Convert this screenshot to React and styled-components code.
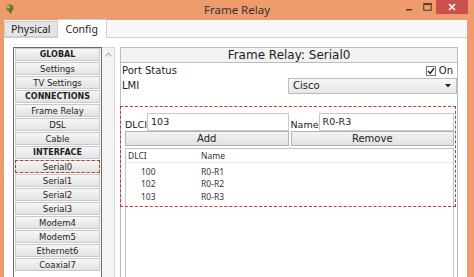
import React from 'react';
import styled, { createGlobalStyle } from 'styled-components';

const GlobalStyle = createGlobalStyle`
  html, body { margin: 0; padding: 0; background: #ee9b6d; }
  * { box-sizing: border-box; }
`;

const Window = styled.div`
  width: 474px;
  height: 277px;
  background: #ee9b6d;
  display: flex;
  flex-direction: column;
  overflow: hidden;
  font-family: 'DejaVu Sans', Verdana, sans-serif;
`;

const TitleBar = styled.div`
  height: 20px;
  flex: none;
  display: flex;
  align-items: flex-start;
  position: relative;
`;

const AppIcon = styled.svg`
  position: absolute;
  left: 5px;
  top: 3px;
`;

const Title = styled.div`
  flex: 1;
  text-align: center;
  font-family: 'Noto Sans', 'Open Sans', sans-serif;
  font-size: 11.5px;
  line-height: 20px;
  color: #3a3330;
`;

const Controls = styled.div`
  position: absolute;
  right: 6px;
  top: 0;
  display: flex;
  align-items: flex-start;
`;

const CtrlBtn = styled.div`
  width: ${p => p.w}px;
  height: 14px;
  display: flex;
  align-items: center;
  justify-content: center;
  background: ${p => p.close ? '#c9504b' : 'transparent'};
`;

const Client = styled.div`
  flex: 1;
  margin: 0 7px 0 4px;
  background: #ffffff;
  display: flex;
  flex-direction: column;
  min-height: 0;
`;

const TabStrip = styled.div`
  height: 18px;
  flex: none;
  display: flex;
  align-items: flex-end;
  background: #f7f7f7;
  border-bottom: 1px solid #cfcfcf;
`;

const Tab = styled.div`
  height: ${p => p.active ? 19 : 16}px;
  margin-bottom: ${p => p.active ? -1 : 0}px;
  padding: 0 ${p => p.active ? 8 : 6}px;
  display: flex;
  align-items: center;
  font-family: 'Noto Sans', 'Open Sans', sans-serif;
  font-size: 10.5px;
  color: #222;
  background: ${p => p.active ? '#ffffff' : '#e4e4e4'};
  border: 1px solid #cfcfcf;
  border-bottom: ${p => p.active ? '1px solid #ffffff' : '1px solid #cfcfcf'};
  border-left: ${p => p.first ? '1px solid #cfcfcf' : 'none'};
`;

const Body = styled.div`
  flex: 1;
  display: flex;
  padding: 9px 9px 0 9px;
  min-height: 0;
`;

const Sidebar = styled.div`
  display: flex;
  flex: none;
  margin-right: 5px;
`;

const NavList = styled.div`
  width: 89px;
  border: 1px solid #6a6a6a;
  border-bottom: none;
  padding: 0 1px;
  display: flex;
  flex-direction: column;
  background: #fff;
`;

const NavItem = styled.div`
  height: 13px;
  margin-bottom: 1px;
  display: flex;
  align-items: center;
  justify-content: center;
  font-size: ${p => p.heading ? 8 : 8.5}px;
  font-weight: ${p => p.heading ? 'bold' : 'normal'};
  color: #1e1e1e;
  background: linear-gradient(#f6f6f6, #e3e3e3);
  border: 1px solid #c9c9c9;
  outline: ${p => p.selected ? '1.5px dashed #c0392b' : 'none'};
  outline-offset: -1px;
`;

const ScrollTrack = styled.div`
  width: 13px;
  border: 1px solid #d6d6d6;
  border-left: none;
  border-bottom: none;
  background: #f4f4f4;
  display: flex;
  justify-content: center;
  padding-top: 4px;
`;

const Panel = styled.div`
  flex: 1;
  position: relative;
  display: flex;
  flex-direction: column;
  border: 1px solid #bdbdbd;
  border-bottom: none;
  min-width: 0;
`;

const PanelHeader = styled.div`
  height: 15px;
  display: flex;
  align-items: center;
  justify-content: center;
  font-size: 12px;
  color: #222;
  background: #f2f2f2;
  border-bottom: 1px solid #bdbdbd;
`;

const FieldRow = styled.div`
  height: 15px;
  display: flex;
  align-items: center;
  justify-content: space-between;
  padding: 0 0 0 1px;
  font-size: 10px;
  color: #222;
`;

const CheckLabel = styled.label`
  display: flex;
  align-items: center;
  gap: 3px;
  margin-right: 4px;
  font-size: 10px;
`;

const CheckBox = styled.span`
  width: 10px;
  height: 10px;
  border: 1px solid #7a7a7a;
  background: #fff;
  display: flex;
  align-items: center;
  justify-content: center;
`;

const Select = styled.div`
  width: 169px;
  height: 16px;
  display: flex;
  align-items: center;
  justify-content: space-between;
  padding: 0 5px 0 4px;
  background: linear-gradient(#f7f7f7, #e6e6e6);
  border: 1px solid #bcbcbc;
  font-size: 10px;
`;

const Form = styled.div`
  margin-top: 20px;
  padding: 0 3px 0 4px;
  display: grid;
  grid-template-columns: 1fr 1fr;
  column-gap: 2px;
`;

const InputGroup = styled.div`
  display: flex;
  align-items: flex-end;
  height: 18px;
`;

const InputLabel = styled.span`
  font-size: 9.5px;
  color: #222;
  padding-bottom: 1px;
`;

const TextInput = styled.div`
  flex: 1;
  height: 18px;
  border: 1px solid #c8c8c8;
  background: #fff;
  font-size: 9.5px;
  padding: 2px 3px;
  color: #222;
`;

const Button = styled.div`
  height: 15px;
  display: flex;
  align-items: center;
  justify-content: center;
  font-size: 10px;
  color: #222;
  background: linear-gradient(#f3f3f3, #e2e2e2);
  border: 1px solid #b4b4b4;
`;

const ListView = styled.div`
  flex: 1;
  margin: 2px 3px 0 4px;
  border: 1px solid #c4c4c4;
  border-bottom: none;
  background: #fff;
  font-family: 'Noto Sans', 'Open Sans', sans-serif;
  font-size: 8.5px;
  color: #333;
`;

const ListRow = styled.div`
  display: grid;
  grid-template-columns: 73px 1fr;
  height: ${p => p.head ? 14 : 12.5}px;
  align-items: center;
  border-bottom: ${p => p.head ? '1px solid #ececec' : 'none'};
  padding-left: ${p => p.head ? 2 : 0}px;
  margin-bottom: ${p => p.head ? 2 : 0}px;
`;

const Cell = styled.span`
  padding-left: ${p => p.indent || 0}px;
`;

const Annotation = styled.div`
  position: absolute;
  left: -1px;
  top: 58px;
  width: 336px;
  height: 101px;
  border: 1.5px dashed #c0392b;
  pointer-events: none;
`;

const navItems = [
  { label: 'GLOBAL', heading: true },
  { label: 'Settings' },
  { label: 'TV Settings' },
  { label: 'CONNECTIONS', heading: true },
  { label: 'Frame Relay' },
  { label: 'DSL' },
  { label: 'Cable' },
  { label: 'INTERFACE', heading: true },
  { label: 'Serial0', selected: true },
  { label: 'Serial1' },
  { label: 'Serial2' },
  { label: 'Serial3' },
  { label: 'Modem4' },
  { label: 'Modem5' },
  { label: 'Ethernet6' },
  { label: 'Coaxial7' },
];

const mappings = [
  { dlci: '100', name: 'R0-R1' },
  { dlci: '102', name: 'R0-R2' },
  { dlci: '103', name: 'R0-R3' },
];

export default function App() {
  return (
    <>
      <GlobalStyle />
      <Window>
        <TitleBar>
          <AppIcon width="10" height="11" viewBox="0 0 10 11">
            <circle cx="5" cy="5" r="3.5" fill="#5d7a2e" />
            <circle cx="3.5" cy="4" r="1.5" fill="#a8c05a" />
            <path d="M5 8 L6 10.5" stroke="#5a3a1a" strokeWidth="1.2" />
            <circle cx="7" cy="3" r="1" fill="#c46a2a" />
          </AppIcon>
          <Title>Frame Relay</Title>
          <Controls>
            <CtrlBtn w={18}>
              <svg width="8" height="8" viewBox="0 0 8 8"><rect x="1" y="6" width="6" height="1.5" fill="#4a3a33" /></svg>
            </CtrlBtn>
            <CtrlBtn w={18}>
              <svg width="9" height="8" viewBox="0 0 9 8"><rect x="0.75" y="0.75" width="7.5" height="6.5" fill="none" stroke="#4a3a33" strokeWidth="1" /><rect x="0.5" y="0.5" width="8" height="1.5" fill="#4a3a33" /></svg>
            </CtrlBtn>
            <CtrlBtn w={32} close>
              <svg width="8" height="8" viewBox="0 0 8 8"><path d="M1 1 L7 7 M7 1 L1 7" stroke="#fff" strokeWidth="1.6" /></svg>
            </CtrlBtn>
          </Controls>
        </TitleBar>
        <Client>
          <TabStrip>
            <Tab first>Physical</Tab>
            <Tab active>Config</Tab>
          </TabStrip>
          <Body>
            <Sidebar>
              <NavList>
                {navItems.map(item => (
                  <NavItem key={item.label} heading={item.heading} selected={item.selected}>
                    {item.label}
                  </NavItem>
                ))}
              </NavList>
              <ScrollTrack>
                <svg width="7" height="5" viewBox="0 0 7 5"><path d="M0.5 4.5 L3.5 1 L6.5 4.5" fill="none" stroke="#b8b8b8" strokeWidth="1.2" /></svg>
              </ScrollTrack>
            </Sidebar>
            <Panel>
              <PanelHeader>Frame Relay: Serial0</PanelHeader>
              <FieldRow>
                <span>Port Status</span>
                <CheckLabel>
                  <CheckBox>
                    <svg width="8" height="8" viewBox="0 0 8 8"><path d="M1 4 L3.2 6.3 L7 1.2" fill="none" stroke="#222" strokeWidth="1.4" /></svg>
                  </CheckBox>
                  On
                </CheckLabel>
              </FieldRow>
              <FieldRow>
                <span>LMI</span>
                <Select>
                  <span>Cisco</span>
                  <svg width="6" height="4" viewBox="0 0 6 4"><path d="M0 0 L6 0 L3 3.5 Z" fill="#222" /></svg>
                </Select>
              </FieldRow>
              <Form>
                <InputGroup>
                  <InputLabel>DLCI</InputLabel>
                  <TextInput>103</TextInput>
                </InputGroup>
                <InputGroup>
                  <InputLabel>Name</InputLabel>
                  <TextInput>R0-R3</TextInput>
                </InputGroup>
                <Button>Add</Button>
                <Button>Remove</Button>
              </Form>
              <ListView>
                <ListRow head>
                  <Cell>DLCI</Cell>
                  <Cell>Name</Cell>
                </ListRow>
                {mappings.map(m => (
                  <ListRow key={m.dlci}>
                    <Cell indent={15}>{m.dlci}</Cell>
                    <Cell indent={2}>{m.name}</Cell>
                  </ListRow>
                ))}
              </ListView>
              <Annotation />
            </Panel>
          </Body>
        </Client>
      </Window>
    </>
  );
}
